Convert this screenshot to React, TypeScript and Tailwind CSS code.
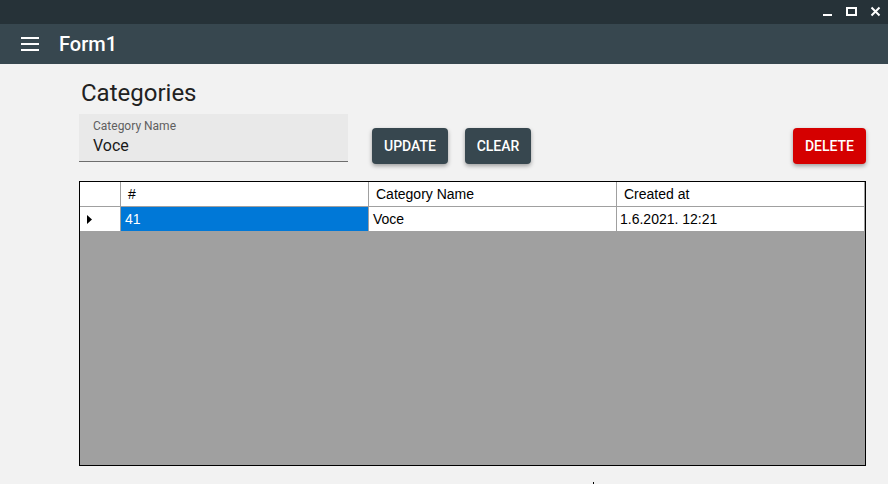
import React from 'react'

const COLUMNS = ['#', 'Category Name', 'Created at']

const ROWS = [{ id: '41', name: 'Voce', createdAt: '1.6.2021. 12:21' }]

function WindowControls() {
  return (
    <svg width="888" height="24" viewBox="0 0 888 24" className="absolute left-0 top-0">
      {/* minimize */}
      <rect x="823" y="14" width="9" height="2" fill="#fff" />
      {/* maximize */}
      <rect x="847" y="8" width="9" height="7" fill="none" stroke="#fff" strokeWidth="2" />
      {/* close */}
      <path d="M871.5 7.5 L879.5 15.5 M879.5 7.5 L871.5 15.5" stroke="#fff" strokeWidth="2" />
    </svg>
  )
}

export default function App() {
  return (
    <div className="relative w-[888px] h-[484px] overflow-hidden flex flex-col bg-[#f2f2f2] font-['Roboto',sans-serif]">
      {/* Title bar */}
      <div className="relative h-[24px] shrink-0 bg-[#263238]">
        <WindowControls />
      </div>

      {/* Header */}
      <div className="h-[40px] shrink-0 bg-[#37474f] flex items-center">
        <svg width="18" height="14" viewBox="0 0 18 14" className="ml-[21px]">
          <rect x="0" y="0" width="18" height="2" fill="#fff" />
          <rect x="0" y="6" width="18" height="2" fill="#fff" />
          <rect x="0" y="12" width="18" height="2" fill="#fff" />
        </svg>
        <span className="ml-[20px] text-[20px] leading-[24px] font-medium text-white">Form1</span>
      </div>

      {/* Content */}
      <div className="flex-1 flex flex-col">
        <h1 className="ml-[81px] mt-[15px] text-[24px] leading-[28px] text-[#212121]">Categories</h1>

        <div className="flex items-start mt-[7px]">
          {/* Text field */}
          <div className="ml-[79px] w-[269px] h-[48px] bg-[#e9e9e9] border-b border-[#6e6e6e] px-[14px] pt-[4px]">
            <div className="text-[12px] leading-[16px] text-[#5f5f5f]">Category Name</div>
            <div className="mt-[2px] text-[16px] leading-[20px] text-[#1a1a1a]">Voce</div>
          </div>

          <button className="ml-[24px] mt-[14px] w-[76px] h-[36px] rounded-[4px] bg-[#37474f] text-white text-[14px] font-medium shadow-[0_2px_4px_rgba(0,0,0,0.35)]">
            UPDATE
          </button>
          <button className="ml-[17px] mt-[14px] w-[66px] h-[36px] rounded-[4px] bg-[#37474f] text-white text-[14px] font-medium shadow-[0_2px_4px_rgba(0,0,0,0.35)]">
            CLEAR
          </button>
          <button className="ml-auto mr-[22px] mt-[14px] w-[73px] h-[36px] rounded-[4px] bg-[#d50000] text-white text-[14px] font-medium shadow-[0_2px_4px_rgba(0,0,0,0.35)]">
            DELETE
          </button>
        </div>

        {/* Data grid */}
        <div className="ml-[79px] mt-[17px] w-[787px] h-[285px] border border-black bg-[#a0a0a0] font-['Liberation_Sans',sans-serif] text-[14px] text-black">
          <div className="flex h-[25px] bg-white border-b border-[#a0a0a0]">
            <div className="w-[41px] border-r border-[#a0a0a0]" />
            {COLUMNS.map(col => (
              <div key={col} className="w-[248px] pl-[7px] leading-[24px] border-r border-[#a0a0a0]">
                {col}
              </div>
            ))}
          </div>
          {ROWS.map(row => (
            <div key={row.id} className="flex h-[24px] bg-white">
              <div className="w-[41px] border-r border-[#a0a0a0] flex items-center pl-[7px]">
                <svg width="5" height="9" viewBox="0 0 5 9">
                  <path d="M0 0 L5 4.5 L0 9 Z" fill="#000" />
                </svg>
              </div>
              <div className="w-[248px] pl-[4px] leading-[24px] bg-[#0078d7] text-white border-r border-[#a0a0a0]">
                {row.id}
              </div>
              <div className="w-[248px] pl-[4px] leading-[24px] border-r border-[#a0a0a0]">{row.name}</div>
              <div className="w-[248px] pl-[3px] leading-[24px] border-r border-[#a0a0a0]">{row.createdAt}</div>
            </div>
          ))}
        </div>
      </div>

      {/* stray cursor tick */}
      <div className="absolute left-[593px] top-[482px] w-px h-[2px] bg-black" />
    </div>
  )
}
